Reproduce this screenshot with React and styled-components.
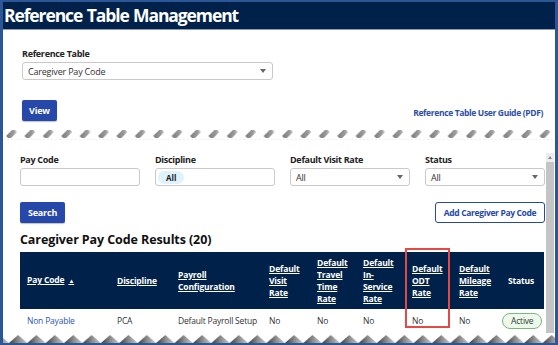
import React from 'react';
import styled, { createGlobalStyle } from 'styled-components';

const GlobalStyle = createGlobalStyle`
  html, body {
    margin: 0;
    padding: 0;
    background: #ffffff;
    overflow: hidden;
  }
  body {
    font-family: "Open Sans", "Noto Sans", sans-serif;
    color: #222;
  }
`;

const Frame = styled.div`
  width: 558px;
  height: 345px;
  box-sizing: border-box;
  border-left: 3px solid #2c5796;
  border-right: 3px solid #2c5796;
  border-top: 2px solid #2c5796;
  border-bottom: 2px solid #2c5796;
  display: flex;
  flex-direction: column;
  overflow: hidden;
  background: #fff;
`;

const Header = styled.div`
  height: 27px;
  flex: none;
  background: #00224a;
  border-bottom: 1px solid #8d9bb0;
  display: flex;
  align-items: center;
  padding-left: 1px;

  h1 {
    margin: 0;
    color: #fff;
    font-size: 17.5px;
    font-weight: 700;
    letter-spacing: -1.1px;
    word-spacing: 1px;
    line-height: 1;
  }
`;

const TopSection = styled.div`
  flex: none;
  padding: 18px 12px 5px 19px;
`;

const Label = styled.div`
  font-size: 9px;
  font-weight: 700;
  color: #222;
  line-height: 12px;
  margin-bottom: 2px;
  letter-spacing: -0.3px;
`;

const Select = styled.div`
  width: ${p => p.$w}px;
  height: 18px;
  box-sizing: border-box;
  border: 1px solid #c9c9c9;
  border-radius: 3px;
  display: flex;
  align-items: center;
  justify-content: space-between;
  padding: 0 6px 0 5px;
  font-size: 9px;
  letter-spacing: -0.2px;
  color: #333;
  background: #fff;

  &::after {
    content: '';
    border-left: 3px solid transparent;
    border-right: 3px solid transparent;
    border-top: 4px solid #666;
  }
`;

const Input = styled.div`
  width: 120px;
  height: 18px;
  box-sizing: border-box;
  border: 1px solid #c9c9c9;
  border-radius: 3px;
  display: flex;
  align-items: center;
  padding-left: 2px;
  background: #fff;
`;

const Chip = styled.span`
  background: #dff3fc;
  border-radius: 8px;
  padding: 1px 8px;
  font-size: 8px;
  font-weight: 700;
  color: #222;
  line-height: 11px;
`;

const ButtonRow = styled.div`
  display: flex;
  align-items: flex-end;
  justify-content: space-between;
  margin-top: ${p => p.$mt}px;
`;

const PrimaryButton = styled.div`
  background: #2548aa;
  color: #fff;
  font-size: 9px;
  font-weight: 700;
  letter-spacing: -0.2px;
  height: 21px;
  padding: 0 ${p => p.$px}px;
  display: flex;
  align-items: center;
  border-radius: 2px;
  box-shadow: 0 1px 1px rgba(0, 0, 0, 0.25);
`;

const OutlineButton = styled.div`
  border: 1px solid #2548aa;
  color: #2548aa;
  font-size: 8.5px;
  font-weight: 700;
  height: 21px;
  box-sizing: border-box;
  width: 110px;
  display: flex;
  align-items: center;
  justify-content: center;
  border-radius: 3px;
  letter-spacing: -0.35px;
`;

const GuideLink = styled.div`
  color: #2b4ea8;
  font-size: 8.5px;
  font-weight: 700;
  letter-spacing: -0.35px;
  margin-bottom: 3px;
`;

const Tear = styled.svg`
  display: block;
  flex: none;
  width: 100%;
  height: ${p => p.$h}px;
`;

const LowerArea = styled.div`
  flex: 1;
  display: flex;
  min-height: 0;
`;

const LowerContent = styled.div`
  flex: 1;
  padding: 14px 1px 0 17px;
  position: relative;
`;

const FilterRow = styled.div`
  display: flex;
  gap: 15px;
`;

const Field = styled.div`
  display: flex;
  flex-direction: column;
`;

const Scrollbar = styled.div`
  width: 8px;
  margin-right: 2px;
  margin-top: 13px;
  background: #ececec;
  display: flex;
  flex-direction: column;
  align-items: center;

  &::before {
    content: '';
    margin-top: 3px;
    border-left: 2px solid transparent;
    border-right: 2px solid transparent;
    border-bottom: 3px solid #888;
  }
  &::after {
    content: '';
    margin-top: 3px;
    width: 8px;
    flex: 1;
    background: #c4c4c4;
  }
`;

const ResultsTitle = styled.h2`
  margin: 8px 0 3px 0;
  font-size: 12.5px;
  font-weight: 700;
  color: #111;
  letter-spacing: -0.1px;
  line-height: 18px;
`;

const Table = styled.table`
  width: 524px;
  border-collapse: collapse;
  table-layout: fixed;
`;

const Th = styled.th`
  background: #00224a;
  color: #fff;
  font-size: 8.5px;
  font-weight: 700;
  letter-spacing: -0.15px;
  text-align: left;
  padding: 0 0 0 7px;
  height: 57px;
  line-height: 12px;
  vertical-align: middle;

  span {
    text-decoration: underline;
  }
`;

const Td = styled.td`
  font-size: 8.5px;
  letter-spacing: -0.2px;
  white-space: nowrap;
  height: 23px;
  padding: 0 0 0 ${p => (p.$pl ?? 7)}px;
  color: ${p => (p.$link ? '#2b58b8' : '#333')};
  vertical-align: middle;
`;

const StatusPill = styled.span`
  display: inline-block;
  border: 1px solid #7cb87c;
  background: #eef8ec;
  color: #2d3b2d;
  border-radius: 9px;
  font-size: 8.5px;
  padding: 1px 8px;
  line-height: 12px;
`;

const SortArrow = styled.span`
  font-size: 6px;
  margin-left: 4px;
  text-decoration: none;
  display: inline-block;
`;

const Highlight = styled.div`
  position: absolute;
  left: 402px;
  top: 108px;
  width: 45px;
  height: 80px;
  border: 2px solid #e34a45;
  box-sizing: border-box;
  pointer-events: none;
`;

const columns = [
  { w: 90, label: ['Pay Code'], sort: true },
  { w: 61, label: ['Discipline'] },
  { w: 91, label: ['Payroll', 'Configuration'] },
  { w: 48, label: ['Default', 'Visit', 'Rate'] },
  { w: 46, label: ['Default', 'Travel', 'Time', 'Rate'] },
  { w: 49, label: ['Default', 'In-', 'Service', 'Rate'] },
  { w: 47, label: ['Default', 'ODT', 'Rate'] },
  { w: 49, label: ['Default', 'Mileage', 'Rate'] },
  { w: 43, label: ['Status'], plain: true },
];

const TopTear = () => (
  <Tear $h={14} viewBox="0 0 552 14" preserveAspectRatio="none">
    <defs>
      <linearGradient id="tg" x1="0" x2="1" y1="0" y2="0">
        <stop offset="0" stopColor="#7d7d7d" />
        <stop offset="0.7" stopColor="#9a9a9a" />
        <stop offset="1" stopColor="#cfcfcf" />
      </linearGradient>
      <pattern id="tp" width="18.4" height="14" patternUnits="userSpaceOnUse" x="2">
        <polygon points="1,10 7,4 10,4 12,6 6,12 3,12" fill="url(#tg)" />
      </pattern>
    </defs>
    <rect width="552" height="14" fill="url(#tp)" />
    <line x1="0" y1="13.5" x2="552" y2="13.5" stroke="#f1f1f1" strokeDasharray="2 2" />
  </Tear>
);

const BottomTear = () => (
  <Tear $h={10} viewBox="0 0 552 10" preserveAspectRatio="none">
    <defs>
      <linearGradient id="bg" x1="0" x2="1" y1="0" y2="0">
        <stop offset="0" stopColor="#3a3a3a" />
        <stop offset="0.5" stopColor="#8a8a8a" />
        <stop offset="1" stopColor="#c8c8c8" />
      </linearGradient>
      <pattern id="bp" width="18.4" height="10" patternUnits="userSpaceOnUse" x="6">
        <polygon points="0,10 9,2 18.4,10" fill="url(#bg)" />
      </pattern>
    </defs>
    <rect width="552" height="10" fill="url(#bp)" />
  </Tear>
);

export default function App() {
  return (
    <>
      <GlobalStyle />
      <Frame>
        <Header>
          <h1>Reference Table Management</h1>
        </Header>

        <TopSection>
          <Label>Reference Table</Label>
          <Select $w={251}>Caregiver Pay Code</Select>
          <ButtonRow $mt={20}>
            <PrimaryButton $px={7}>View</PrimaryButton>
            <GuideLink>Reference Table User Guide (PDF)</GuideLink>
          </ButtonRow>
        </TopSection>

        <TopTear />

        <LowerArea>
          <LowerContent>
            <FilterRow>
              <Field>
                <Label>Pay Code</Label>
                <Input />
              </Field>
              <Field>
                <Label>Discipline</Label>
                <Input>
                  <Chip>All</Chip>
                </Input>
              </Field>
              <Field>
                <Label>Default Visit Rate</Label>
                <Select $w={120}>All</Select>
              </Field>
              <Field>
                <Label>Status</Label>
                <Select $w={120}>All</Select>
              </Field>
            </FilterRow>

            <ButtonRow $mt={16}>
              <PrimaryButton $px={8}>Search</PrimaryButton>
              <OutlineButton>Add Caregiver Pay Code</OutlineButton>
            </ButtonRow>

            <ResultsTitle>Caregiver Pay Code Results (20)</ResultsTitle>

            <Table>
              <colgroup>
                {columns.map((c, i) => (
                  <col key={i} style={{ width: c.w }} />
                ))}
              </colgroup>
              <thead>
                <tr>
                  {columns.map((c, i) => (
                    <Th key={i}>
                      {c.label.map((l, j) => (
                        <React.Fragment key={j}>
                          {j > 0 && <br />}
                          {c.plain ? l : <span>{l}</span>}
                        </React.Fragment>
                      ))}
                      {c.sort && <SortArrow>▲</SortArrow>}
                    </Th>
                  ))}
                </tr>
              </thead>
              <tbody>
                <tr>
                  <Td $link>Non Payable</Td>
                  <Td>PCA</Td>
                  <Td>Default Payroll Setup</Td>
                  <Td>No</Td>
                  <Td>No</Td>
                  <Td>No</Td>
                  <Td>No</Td>
                  <Td>No</Td>
                  <Td $pl={1}>
                    <StatusPill>Active</StatusPill>
                  </Td>
                </tr>
              </tbody>
            </Table>

            <Highlight />
          </LowerContent>
          <Scrollbar />
        </LowerArea>

        <BottomTear />
      </Frame>
    </>
  );
}
